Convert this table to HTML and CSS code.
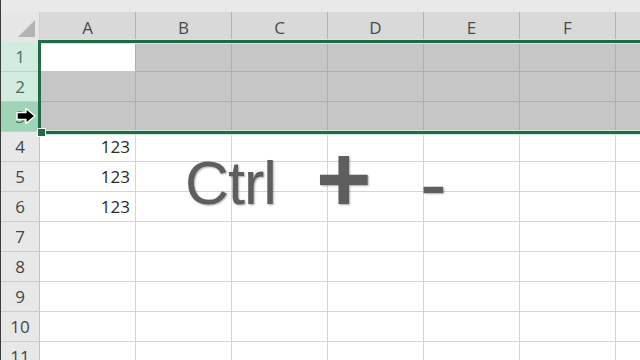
FILE: index.html
```html
<!DOCTYPE html>
<html>
<head>
<meta charset="utf-8">
<link rel="stylesheet" href="styles.css">
</head>
<body>
<div class="sheet">
  <div class="topbar"></div>
  <div class="grid">
    <div class="corner"><span class="tri"></span></div>
    <div class="ch">A</div><div class="ch">B</div><div class="ch">C</div><div class="ch">D</div><div class="ch">E</div><div class="ch">F</div><div class="ch"></div>

    <div class="rh rsel">1</div><div class="c a1"></div><div class="c s"></div><div class="c s"></div><div class="c s"></div><div class="c s"></div><div class="c s"></div><div class="c s"></div>
    <div class="rh rsel">2</div><div class="c s"></div><div class="c s"></div><div class="c s"></div><div class="c s"></div><div class="c s"></div><div class="c s"></div><div class="c s"></div>
    <div class="rh rsel rhot">3</div><div class="c s"></div><div class="c s"></div><div class="c s"></div><div class="c s"></div><div class="c s"></div><div class="c s"></div><div class="c s"></div>
    <div class="rh">4</div><div class="c num">123</div><div class="c"></div><div class="c"></div><div class="c"></div><div class="c"></div><div class="c"></div><div class="c"></div>
    <div class="rh">5</div><div class="c num">123</div><div class="c"></div><div class="c"></div><div class="c"></div><div class="c"></div><div class="c"></div><div class="c"></div>
    <div class="rh">6</div><div class="c num">123</div><div class="c"></div><div class="c"></div><div class="c"></div><div class="c"></div><div class="c"></div><div class="c"></div>
    <div class="rh">7</div><div class="c"></div><div class="c"></div><div class="c"></div><div class="c"></div><div class="c"></div><div class="c"></div><div class="c"></div>
    <div class="rh">8</div><div class="c"></div><div class="c"></div><div class="c"></div><div class="c"></div><div class="c"></div><div class="c"></div><div class="c"></div>
    <div class="rh">9</div><div class="c"></div><div class="c"></div><div class="c"></div><div class="c"></div><div class="c"></div><div class="c"></div><div class="c"></div>
    <div class="rh">10</div><div class="c"></div><div class="c"></div><div class="c"></div><div class="c"></div><div class="c"></div><div class="c"></div><div class="c"></div>
    <div class="rh">11</div><div class="c"></div><div class="c"></div><div class="c"></div><div class="c"></div><div class="c"></div><div class="c"></div><div class="c"></div>
  </div>

  <div class="selection"></div>
  <div class="handle"></div>
  <svg class="cursor" width="22" height="18" viewBox="0 0 22 18">
    <path d="M2 5.5 H11 V1.5 L20 9 L11 16.5 V12.5 H2 Z" fill="#000" stroke="#fff" stroke-width="1.4" stroke-linejoin="round"/>
  </svg>

  <span class="key ctrl">Ctrl</span>
  <span class="key plus">+</span>
  <span class="key minus">-</span>
</div>
</body>
</html>
```
FILE: styles.css
```css
html, body {
  margin: 0;
  padding: 0;
  background: #ffffff;
  overflow: hidden;
}

.sheet {
  position: relative;
  width: 640px;
  height: 360px;
  overflow: hidden;
  border-left: 1px solid #3c3c3c;
  box-sizing: border-box;
  font-family: "Open Sans", "Liberation Sans", sans-serif;
}

.topbar {
  height: 12px;
  background: #e9e9e9;
}

.grid {
  display: grid;
  grid-template-columns: 39px repeat(6, 96px) 40px;
  grid-template-rows: repeat(12, 30px);
}

.grid > div {
  box-sizing: border-box;
}

.corner {
  position: relative;
  background: #e6e6e6;
  border-right: 1px solid #cfcfcf;
}

.tri {
  position: absolute;
  right: 4px;
  bottom: 5px;
  width: 0;
  height: 0;
  border-left: 17px solid transparent;
  border-bottom: 17px solid #b3b3b3;
}

.ch {
  background: #d9d9d9;
  border-right: 1px solid #b3b3b3;
  color: #4a4a4a;
  font-size: 17px;
  display: flex;
  align-items: center;
  justify-content: center;
  padding-top: 1px;
}

.rh {
  background: #e8e8e8;
  border-bottom: 1px solid #cdcdcd;
  border-right: 1px solid #c3c3c3;
  color: #454545;
  font-size: 17px;
  display: flex;
  align-items: center;
  justify-content: center;
}

.rh.rsel {
  background: #d2ecdf;
  color: #4f6e5c;
  border-bottom-color: #b9d7c7;
}

.rh.rhot {
  background: #9fd4b6;
  color: #3c6b50;
}

.c {
  background: #ffffff;
  border-right: 1px solid #d6d6d6;
  border-bottom: 1px solid #d6d6d6;
}

.c.s {
  background: #c6c6c6;
  border-right-color: #adadad;
  border-bottom-color: #adadad;
}

.c.a1 {
  background: #ffffff;
  border-right-color: #adadad;
  border-bottom-color: #c6c6c6;
}

.c.num {
  font-size: 17px;
  color: #2a2a2a;
  display: flex;
  align-items: center;
  justify-content: flex-end;
  padding-right: 5px;
}

.selection {
  position: absolute;
  left: 37px;
  top: 40px;
  width: 620px;
  height: 94px;
  box-sizing: border-box;
  border: 3px solid #1f6b45;
  border-right: none;
  box-shadow: inset 0 1px 0 #cfeadd, inset 0 -1px 0 #cfeadd, 0 -1px 0 #cfeadd, 0 1px 0 #cfeadd;
}

.handle {
  position: absolute;
  left: 36px;
  top: 128px;
  width: 7px;
  height: 7px;
  background: #1f6b45;
  border: 1px solid #ffffff;
}

.cursor {
  position: absolute;
  left: 14px;
  top: 107px;
}

.key {
  position: absolute;
  font-family: "Liberation Sans", Arial, sans-serif;
  line-height: 1;
  color: #5e5e5e;
  text-shadow: 1px 1px 2px rgba(0, 0, 0, 0.35);
  white-space: nowrap;
}

.ctrl {
  left: 184px;
  top: 153px;
  font-size: 61px;
  letter-spacing: -1px;
}

.plus {
  left: 315px;
  top: 131px;
  font-size: 95px;
  font-weight: bold;
}

.minus {
  left: 419px;
  top: 144px;
  font-size: 80px;
}
```
